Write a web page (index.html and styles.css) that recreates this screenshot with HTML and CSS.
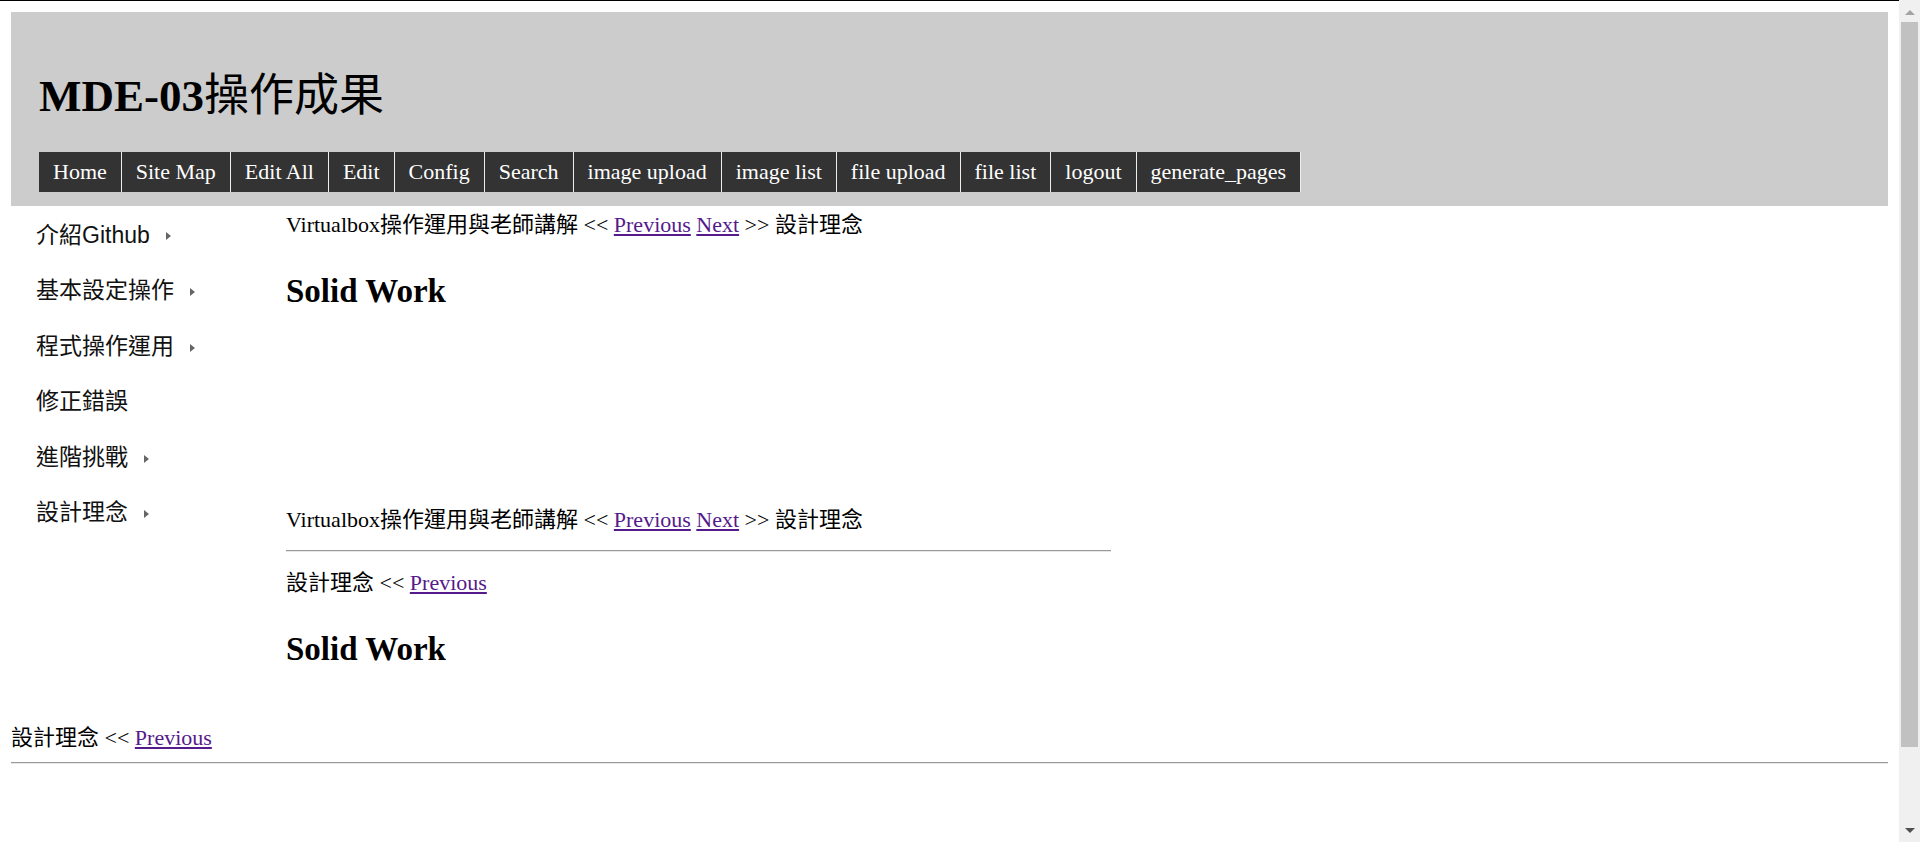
FILE: index.html
```html
<!DOCTYPE html>
<html lang="zh-Hant">
<head>
<meta charset="utf-8">
<title>MDE-03操作成果</title>
<link rel="stylesheet" href="styles.css">
</head>
<body>
<header class="site-header">
  <h1 class="site-title">MDE-03<span class="cjk">操作成果</span></h1>
  <nav class="topnav">
    <a href="#">Home</a>
    <a href="#">Site Map</a>
    <a href="#">Edit All</a>
    <a href="#">Edit</a>
    <a href="#">Config</a>
    <a href="#">Search</a>
    <a href="#">image upload</a>
    <a href="#">image list</a>
    <a href="#">file upload</a>
    <a href="#">file list</a>
    <a href="#">logout</a>
    <a href="#">generate_pages</a>
  </nav>
</header>

<div class="layout">
  <aside class="sidebar">
    <ul class="menu">
      <li><a href="#">介紹Github</a><span class="caret"></span></li>
      <li><a href="#">基本設定操作</a><span class="caret"></span></li>
      <li><a href="#">程式操作運用</a><span class="caret"></span></li>
      <li><a href="#">修正錯誤</a></li>
      <li><a href="#">進階挑戰</a><span class="caret"></span></li>
      <li><a href="#">設計理念</a><span class="caret"></span></li>
    </ul>
  </aside>
  <main class="content">
    <p class="crumb first">Virtualbox操作運用與老師講解 &lt;&lt; <a href="#">Previous</a> <a href="#">Next</a> &gt;&gt; 設計理念</p>
    <h2 class="page-title">Solid Work</h2>
    <div class="page-body"></div>
    <p class="crumb">Virtualbox操作運用與老師講解 &lt;&lt; <a href="#">Previous</a> <a href="#">Next</a> &gt;&gt; 設計理念</p>
    <hr class="divider short">
    <p class="crumb after-rule">設計理念 &lt;&lt; <a href="#">Previous</a></p>
    <h2 class="page-title">Solid Work</h2>
  </main>
</div>

<footer class="page-footer">
  <p class="crumb">設計理念 &lt;&lt; <a href="#">Previous</a></p>
  <hr class="divider">
</footer>

<div class="scrollbar" aria-hidden="true">
  <span class="sb-up"></span>
  <span class="sb-thumb"></span>
  <span class="sb-down"></span>
</div>
</body>
</html>
```

FILE: styles.css
```css
html {
  margin: 0;
  padding: 0;
  border-top: 1px solid #000;
  overflow: hidden;
  background: #fff;
}

body {
  margin: 11px 32px 11px 11px;
  font-family: "Liberation Serif", "Noto Sans CJK TC", serif;
  font-size: 22px;
  color: #000;
}

/* header */
.site-header {
  background: #cccccc;
  padding: 58px 28px 14px;
}

.site-title {
  margin: 0 0 30px;
  font-size: 45px;
  line-height: 52px;
  height: 52px;
  font-weight: 700;
  color: #000;
}

.site-title .cjk {
  font-weight: 400;
}

.topnav {
  display: inline-flex;
  background: #333;
  height: 40px;
}

.topnav a {
  display: block;
  padding: 0 14px;
  line-height: 40px;
  font-size: 22px;
  color: #fff;
  text-decoration: none;
  border-right: 1px solid #eee;
}

/* layout */
.layout {
  display: flex;
}

.sidebar {
  width: 275px;
  flex: none;
}

.menu {
  list-style: none;
  margin: 0;
  padding: 1.5px 0 0 25px;
  font-family: "Liberation Sans", "Noto Sans CJK TC", sans-serif;
  font-size: 23px;
}

.menu li {
  line-height: 55.6px;
}

.menu a {
  color: #111;
  text-decoration: none;
}

.caret {
  display: inline-block;
  width: 0;
  height: 0;
  margin-left: 16px;
  border-left: 5px solid #666;
  border-top: 4.5px solid transparent;
  border-bottom: 4.5px solid transparent;
  vertical-align: middle;
}

.content {
  flex: 1;
  min-width: 0;
}

.crumb {
  margin: 0;
  line-height: 26px;
  font-size: 22px;
}

.crumb a {
  color: #551a8b;
  text-decoration: underline;
}

.crumb.first {
  margin-top: 6px;
}

.page-title {
  margin: 34px 0;
  font-size: 33px;
  line-height: 38px;
  font-weight: 700;
}

.page-body {
  height: 163px;
  margin-top: -34px;
}

.page-body + .crumb {
  margin-top: 34px;
}

.divider {
  margin: 17px 0 0;
  height: 0;
  border: 0;
  border-top: 1px solid #9a9a9a;
  border-bottom: 1px solid #e6e6e6;
}

.divider.short {
  width: 825px;
}

.crumb.after-rule {
  margin-top: 17.5px;
}

.page-footer {
  margin-top: 23px;
}

.page-footer .divider {
  margin-top: 11px;
}

/* fake window scrollbar */
.scrollbar {
  position: fixed;
  top: 0;
  right: 0;
  width: 21px;
  height: 100%;
  background: #f0f0f0;
}

.sb-up,
.sb-down,
.sb-thumb {
  position: absolute;
  display: block;
}

.sb-up {
  top: 10px;
  left: 6px;
  width: 0;
  height: 0;
  border-left: 5px solid transparent;
  border-right: 5px solid transparent;
  border-bottom: 5px solid #a3a3a3;
}

.sb-thumb {
  top: 22px;
  left: 2px;
  width: 17px;
  height: 725px;
  background: #c1c1c1;
}

.sb-down {
  top: 828px;
  left: 6px;
  width: 0;
  height: 0;
  border-left: 5px solid transparent;
  border-right: 5px solid transparent;
  border-top: 5px solid #505050;
}
```
